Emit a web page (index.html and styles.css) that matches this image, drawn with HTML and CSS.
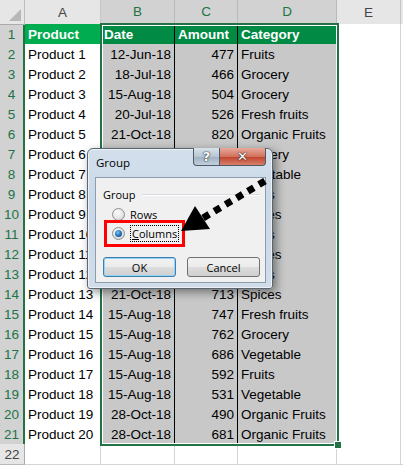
FILE: index.html
```html
<!DOCTYPE html>
<html lang="en">
<head>
    <meta charset="UTF-8">
    <title>Group Columns</title>
    <link rel="stylesheet" href="styles.css">
</head>
<body>
<div class="sheet">
    <!-- column headers -->
    <div class="row head">
        <div class="corner"></div>
        <div class="ch">A</div>
        <div class="ch sel">B</div>
        <div class="ch sel">C</div>
        <div class="ch sel">D</div>
        <div class="ch">E</div>
        <div class="ch"></div>
    </div>

    <div class="row">
        <div class="rh">1</div>
        <div class="c a title">Product</div>
        <div class="c b title">Date</div>
        <div class="c b title">Amount</div>
        <div class="c b title">Category</div>
        <div class="c e"></div><div class="c e"></div>
    </div>
    <div class="row">
        <div class="rh">2</div>
        <div class="c a">Product 1</div>
        <div class="c b num">12-Jun-18</div>
        <div class="c b num">477</div>
        <div class="c b">Fruits</div>
        <div class="c e"></div><div class="c e"></div>
    </div>
    <div class="row">
        <div class="rh">3</div>
        <div class="c a">Product 2</div>
        <div class="c b num">18-Jul-18</div>
        <div class="c b num">466</div>
        <div class="c b">Grocery</div>
        <div class="c e"></div><div class="c e"></div>
    </div>
    <div class="row">
        <div class="rh">4</div>
        <div class="c a">Product 3</div>
        <div class="c b num">15-Aug-18</div>
        <div class="c b num">504</div>
        <div class="c b">Grocery</div>
        <div class="c e"></div><div class="c e"></div>
    </div>
    <div class="row">
        <div class="rh">5</div>
        <div class="c a">Product 4</div>
        <div class="c b num">20-Jul-18</div>
        <div class="c b num">526</div>
        <div class="c b">Fresh fruits</div>
        <div class="c e"></div><div class="c e"></div>
    </div>
    <div class="row">
        <div class="rh">6</div>
        <div class="c a">Product 5</div>
        <div class="c b num">21-Oct-18</div>
        <div class="c b num">820</div>
        <div class="c b">Organic Fruits</div>
        <div class="c e"></div><div class="c e"></div>
    </div>
    <div class="row">
        <div class="rh">7</div>
        <div class="c a">Product 6</div>
        <div class="c b num">20-Jul-18</div>
        <div class="c b num">612</div>
        <div class="c b">Grocery</div>
        <div class="c e"></div><div class="c e"></div>
    </div>
    <div class="row">
        <div class="rh">8</div>
        <div class="c a">Product 7</div>
        <div class="c b num">21-Oct-18</div>
        <div class="c b num">585</div>
        <div class="c b">Vegetable</div>
        <div class="c e"></div><div class="c e"></div>
    </div>
    <div class="row">
        <div class="rh">9</div>
        <div class="c a">Product 8</div>
        <div class="c b num">15-Aug-18</div>
        <div class="c b num">649</div>
        <div class="c b">Fruits</div>
        <div class="c e"></div><div class="c e"></div>
    </div>
    <div class="row">
        <div class="rh">10</div>
        <div class="c a">Product 9</div>
        <div class="c b num">12-Jun-18</div>
        <div class="c b num">538</div>
        <div class="c b">Spices</div>
        <div class="c e"></div><div class="c e"></div>
    </div>
    <div class="row">
        <div class="rh">11</div>
        <div class="c a">Product 10</div>
        <div class="c b num">18-Jul-18</div>
        <div class="c b num">704</div>
        <div class="c b">Fruits</div>
        <div class="c e"></div><div class="c e"></div>
    </div>
    <div class="row">
        <div class="rh">12</div>
        <div class="c a">Product 11</div>
        <div class="c b num">20-Jul-18</div>
        <div class="c b num">569</div>
        <div class="c b">Spices</div>
        <div class="c e"></div><div class="c e"></div>
    </div>
    <div class="row">
        <div class="rh">13</div>
        <div class="c a">Product 12</div>
        <div class="c b num">15-Aug-18</div>
        <div class="c b num">621</div>
        <div class="c b">Fruits</div>
        <div class="c e"></div><div class="c e"></div>
    </div>
    <div class="row">
        <div class="rh">14</div>
        <div class="c a">Product 13</div>
        <div class="c b num">21-Oct-18</div>
        <div class="c b num">713</div>
        <div class="c b">Spices</div>
        <div class="c e"></div><div class="c e"></div>
    </div>
    <div class="row">
        <div class="rh">15</div>
        <div class="c a">Product 14</div>
        <div class="c b num">15-Aug-18</div>
        <div class="c b num">747</div>
        <div class="c b">Fresh fruits</div>
        <div class="c e"></div><div class="c e"></div>
    </div>
    <div class="row">
        <div class="rh">16</div>
        <div class="c a">Product 15</div>
        <div class="c b num">15-Aug-18</div>
        <div class="c b num">762</div>
        <div class="c b">Grocery</div>
        <div class="c e"></div><div class="c e"></div>
    </div>
    <div class="row">
        <div class="rh">17</div>
        <div class="c a">Product 16</div>
        <div class="c b num">15-Aug-18</div>
        <div class="c b num">686</div>
        <div class="c b">Vegetable</div>
        <div class="c e"></div><div class="c e"></div>
    </div>
    <div class="row">
        <div class="rh">18</div>
        <div class="c a">Product 17</div>
        <div class="c b num">15-Aug-18</div>
        <div class="c b num">592</div>
        <div class="c b">Fruits</div>
        <div class="c e"></div><div class="c e"></div>
    </div>
    <div class="row">
        <div class="rh">19</div>
        <div class="c a">Product 18</div>
        <div class="c b num">15-Aug-18</div>
        <div class="c b num">531</div>
        <div class="c b">Vegetable</div>
        <div class="c e"></div><div class="c e"></div>
    </div>
    <div class="row">
        <div class="rh">20</div>
        <div class="c a">Product 19</div>
        <div class="c b num">28-Oct-18</div>
        <div class="c b num">490</div>
        <div class="c b">Organic Fruits</div>
        <div class="c e"></div><div class="c e"></div>
    </div>
    <div class="row">
        <div class="rh">21</div>
        <div class="c a">Product 20</div>
        <div class="c b num">28-Oct-18</div>
        <div class="c b num">681</div>
        <div class="c b">Organic Fruits</div>
        <div class="c e"></div><div class="c e"></div>
    </div>
    <div class="row">
        <div class="rh off">22</div>
        <div class="c e"></div><div class="c e"></div><div class="c e"></div>
        <div class="c e"></div><div class="c e"></div><div class="c e"></div>
    </div>

    <!-- selected range B1:D21 -->
    <div class="selection"><span class="handle"></span></div>

    <!-- Group dialog -->
    <div class="dialog">
        <div class="caption">Group</div>
        <div class="caption-buttons">
            <span class="cap-btn help">?</span>
            <span class="cap-btn close">&#x2715;</span>
        </div>
        <div class="client">
            <div class="legend"><span>Group</span><i></i></div>
            <label class="radio"><span class="dot"></span><span class="text"><u>R</u>ows</span></label>
            <label class="radio"><span class="dot on"></span><span class="text focus"><u>C</u>olumns</span></label>
            <div class="buttons">
                <button class="btn default">OK</button>
                <button class="btn">Cancel</button>
            </div>
            <div class="mark"></div>
        </div>
    </div>

    <!-- pointer arrow -->
    <svg class="pointer" width="403" height="466" viewBox="0 0 403 466">
        <line x1="265" y1="181" x2="203" y2="218" stroke="#000" stroke-width="7" stroke-dasharray="7 6"/>
        <polygon points="181,231 195,206 210,229" fill="#000"/>
    </svg>
</div>
</body>
</html>
```

FILE: styles.css
```css
body {
    margin: 0;
    background: #fff;
}
.sheet {
    position: relative;
    width: 403px;
    height: 466px;
    overflow: hidden;
    font-family: "Liberation Sans", Arial, sans-serif;
    font-size: 13.5px;
    color: #000;
}
.row {
    display: grid;
    grid-template-columns: 25px 76px 74px 63px 99px 64px 10px;
    height: 20px;
}
.row.head {
    height: 24px;
}

/* headers */
.corner {
    background: #e6e6e6;
    border-right: 1px solid #bdbdbd;
    border-bottom: 1px solid #ababab;
    position: relative;
}
.corner::after {
    content: "";
    position: absolute;
    right: 3px;
    bottom: 3px;
    border-left: 12px solid transparent;
    border-bottom: 12px solid #b7b7b7;
}
.ch {
    box-sizing: border-box;
    background: #e6e6e6;
    color: #444;
    text-align: center;
    line-height: 23px;
    padding-top: 1px;
    border-right: 1px solid #c6c6c6;
    border-bottom: 1px solid #ababab;
}
.ch.sel {
    background: #d2d2d2;
    color: #217346;
    border-right-color: #bababa;
    border-bottom: 2px solid #217346;
    line-height: 22px;
}
.rh {
    box-sizing: border-box;
    background: #d2d2d2;
    color: #217346;
    text-align: center;
    line-height: 19px;
    padding-top: 1px;
    border-right: 2px solid #217346;
    border-bottom: 1px solid #bababa;
}
.rh.off {
    background: #e6e6e6;
    color: #444;
    border-right: 1px solid #ababab;
}

/* cells */
.c {
    box-sizing: border-box;
    padding: 1px 3px 0;
    line-height: 19px;
    white-space: nowrap;
    overflow: hidden;
    border-right: 1px solid #000;
    border-bottom: 1px solid #000;
}
.c.a {
    background: #fff;
}
.c.b {
    background: #c8c8c8;
}
.c.num {
    text-align: right;
}
.c.title {
    font-weight: bold;
    color: #fff;
    background: #008a43;
}
.c.a.title {
    background: #00ac50;
}
.c.e {
    background: #fff;
    border-right-color: #d4d4d4;
    border-bottom-color: #d4d4d4;
}

.selection {
    position: absolute;
    left: 100px;
    top: 23px;
    width: 239px;
    height: 423px;
    box-sizing: border-box;
    border: 2px solid #217346;
    box-shadow: inset 0 0 0 1px #fff;
}
.handle {
    position: absolute;
    right: -5px;
    bottom: -5px;
    width: 6px;
    height: 6px;
    background: #217346;
    border: 1px solid #fff;
}

/* dialog */
.dialog {
    position: absolute;
    left: 87px;
    top: 148px;
    width: 186px;
    height: 141px;
    box-sizing: border-box;
    padding: 28px 6px 5px 7px;
    background: linear-gradient(#d3dfeb, #c9d8e8 40%, #d0dcea);
    border: 1px solid #5b6770;
    border-radius: 6px 6px 3px 3px;
    box-shadow: 3px 3px 10px rgba(0, 0, 0, 0.45), inset 0 0 0 1px rgba(255, 255, 255, 0.6);
    font-family: "Open Sans", "Noto Sans", sans-serif;
    font-size: 11px;
}
.caption {
    position: absolute;
    left: 8px;
    top: 6px;
    font-size: 11.5px;
    color: #000;
}
.caption-buttons {
    position: absolute;
    right: 6px;
    top: -1px;
    display: flex;
}
.cap-btn {
    height: 18px;
    box-sizing: border-box;
    color: #fff;
    font-family: "DejaVu Sans", sans-serif;
    font-weight: bold;
    text-align: center;
    line-height: 17px;
    border: 1px solid #4f5a66;
    border-top: none;
    text-shadow: 0 0 2px #333, 0 0 1px #000;
}
.cap-btn.help {
    width: 27px;
    font-size: 13px;
    border-radius: 0 0 0 4px;
    background: linear-gradient(#d9e2eb, #b8c6d4 50%, #9fb0c2 51%, #c2cfdc);
}
.cap-btn.close {
    width: 46px;
    font-size: 13px;
    border-left: none;
    border-radius: 0 0 4px 0;
    background: linear-gradient(#e9a99c, #d2705e 50%, #c0412b 51%, #d7806c);
}
.client {
    position: relative;
    height: 100%;
    box-sizing: border-box;
    padding: 9px 5px 0 7px;
    background: #f0f0f0;
    border: 1px solid #8c9dad;
}
.legend {
    display: flex;
    align-items: center;
    gap: 6px;
    height: 14px;
    color: #000;
}
.legend i {
    flex: 1;
    height: 1px;
    background: #d5dbe0;
    border-bottom: 1px solid #fff;
    margin-top: 2px;
}
.radio {
    display: flex;
    align-items: center;
    gap: 5px;
    height: 19px;
    margin-left: 9px;
}
.radio:first-of-type {
    margin-top: 4px;
}
.text {
    white-space: nowrap;
}
.dot {
    position: relative;
    width: 11px;
    height: 11px;
    border: 1px solid #8e8f8f;
    border-radius: 50%;
    background: radial-gradient(circle at 40% 35%, #fff, #dcdcdc 70%, #c8c8c8);
}
.dot.on::after {
    content: "";
    position: absolute;
    left: 2px;
    top: 2px;
    width: 7px;
    height: 7px;
    border-radius: 50%;
    background: radial-gradient(circle at 40% 35%, #7ec4f0, #1c6fb7 55%, #0b3e72);
}
.focus {
    border: 1px dotted #000;
    padding: 0 1px;
    line-height: 15px;
}
.buttons {
    display: flex;
    gap: 11px;
    margin-top: 14px;
}
.btn {
    width: 73px;
    height: 20px;
    padding: 0;
    font-family: inherit;
    font-size: 11px;
    color: #000;
    border: 1px solid #707070;
    border-radius: 3px;
    background: linear-gradient(#f2f2f2, #ebebeb 50%, #dddddd 51%, #cfcfcf);
}
.btn.default {
    border-color: #3c7fb1;
    box-shadow: inset 0 0 0 1px #94d3f3;
}
.mark {
    position: absolute;
    left: 8px;
    top: 42px;
    width: 81px;
    height: 27px;
    box-sizing: border-box;
    border: 3px solid #f00;
}

.pointer {
    position: absolute;
    left: 0;
    top: 0;
    pointer-events: none;
}
```
